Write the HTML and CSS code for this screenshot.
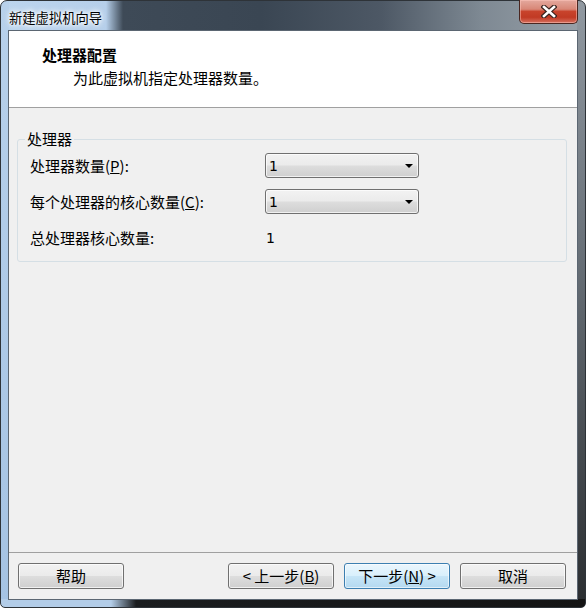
FILE: index.html
```html
<!DOCTYPE html>
<html lang="zh-CN">
<head>
    <meta charset="UTF-8">
    <meta name="viewport" content="width=device-width, initial-scale=1.0">
    <title>新建虚拟机向导</title>
    <link rel="stylesheet" href="styles.css">
</head>
<body>
    <!-- Janela do assistente -->
    <div class="window">
        <div class="titlebar">
            <span class="title">新建虚拟机向导</span>
            <button class="close-btn" aria-label="关闭">
                <svg width="16" height="13" viewBox="0 0 16 13">
                    <path d="M3 2 L13 11 M13 2 L3 11" stroke="#3b2520" stroke-width="5" stroke-linecap="square"/>
                    <path d="M3 2 L13 11 M13 2 L3 11" stroke="#ffffff" stroke-width="2.6" stroke-linecap="square"/>
                </svg>
            </button>
        </div>

        <div class="client">
            <!-- cabecalho branco -->
            <div class="header">
                <h1>处理器配置</h1>
                <p>为此虚拟机指定处理器数量。</p>
            </div>

            <div class="content">
                <fieldset class="group">
                    <legend>处理器</legend>
                    <div class="row">
                        <label>处理器数量(<u>P</u>):</label>
                        <div class="combo"><span class="num">1</span><span class="arrow"></span></div>
                    </div>
                    <div class="row">
                        <label>每个处理器的核心数量(<u>C</u>):</label>
                        <div class="combo"><span class="num">1</span><span class="arrow"></span></div>
                    </div>
                    <div class="row">
                        <label>总处理器核心数量:</label>
                        <span class="num value">1</span>
                    </div>
                </fieldset>
            </div>

            <!-- botoes -->
            <div class="footer">
                <button class="btn help">帮助</button>
                <button class="btn">&lt;&nbsp;上一步(<u>B</u>)</button>
                <button class="btn focused">下一步(<u>N</u>)&nbsp;&gt;</button>
                <button class="btn">取消</button>
            </div>
        </div>
    </div>
</body>
</html>
```

FILE: styles.css
```css
* {
  margin: 0;
  padding: 0;
  box-sizing: border-box;
}

body {
  width: 586px;
  height: 608px;
  font-family: 'Noto Sans CJK SC', 'DejaVu Sans', sans-serif;
  font-size: 15px;
  color: #000;
  overflow: hidden;
}

/* moldura estilo Aero */
.window {
  width: 586px;
  height: 608px;
  border: 1px solid #2e3338;
  border-radius: 7px 7px 5px 5px;
  padding: 0 7px 7px 7px;
  display: flex;
  flex-direction: column;
  background:
    linear-gradient(to right, #b3cde8 0, #b3cde8 110px, #1b1d1f 135px, #141414 100%) left bottom / 100% 8px no-repeat,
    linear-gradient(to bottom, #b8d1eb, #a5c3e3) left top / 8px 100% no-repeat,
    linear-gradient(to bottom, #9199a1 0, #6a727a 40%, #2a2d30 100%) right top / 8px 100% no-repeat,
    linear-gradient(to right, #bcd5ee 0, #b6cfea 105px, #3e4a57 122px, #3a4653 260px, #4d5865 380px, #7e8993 480px, #9aa2aa 586px);
}

.titlebar {
  height: 29px;
  display: flex;
  justify-content: space-between;
  align-items: flex-start;
}

.title {
  font-size: 13.3px;
  line-height: 18px;
  margin-top: 8px;
  margin-left: 1px;
  text-shadow: 0 0 6px #fff, 0 0 6px #fff, 0 0 3px #fff;
}

.close-btn {
  width: 59px;
  height: 24px;
  margin-top: -1px;
  border: 1px solid #4a2620;
  border-top: none;
  border-radius: 0 0 5px 5px;
  background: linear-gradient(to bottom, #e4a99e 0, #d88777 40%, #c8432c 50%, #c13a24 75%, #d6705f 100%);
  box-shadow: inset 0 0 0 1px rgba(255, 200, 190, 0.5);
  display: flex;
  justify-content: center;
  align-items: center;
}

.client {
  flex: 1;
  border: 1px solid #5b6672;
  background-color: #f0f0f0;
  display: flex;
  flex-direction: column;
}

.header {
  height: 77px;
  background-color: #fff;
  border-bottom: 1px solid #a0a0a0;
  padding: 14px 0 0 33px;
}

.header h1 {
  font-size: 15px;
  font-weight: bold;
  line-height: 20px;
}

.header p {
  line-height: 20px;
  margin-top: 3px;
  padding-left: 31px;
}

.content {
  flex: 1;
  padding: 21px 10px 0 8px;
}

.group {
  border: 1px solid #d5dfe5;
  border-radius: 3px;
  padding: 4px 12px 11px 12px;
}

.group legend {
  margin-left: -5px;
  padding: 0 2px;
  line-height: 20px;
}

.row {
  display: grid;
  grid-template-columns: 235px 154px;
  align-items: center;
  height: 25px;
  margin-bottom: 11px;
}

.row:last-child {
  margin-bottom: 0;
}

.row label {
  line-height: 20px;
}

.num {
  font-family: 'DejaVu Sans', sans-serif;
  font-size: 14px;
}

.value {
  padding-left: 1px;
}

.combo {
  height: 25px;
  border: 1px solid #707070;
  border-radius: 3px;
  background: linear-gradient(to bottom, #f2f2f2 0, #ebebeb 48%, #dddddd 52%, #cfcfcf 100%);
  box-shadow: inset 0 0 0 1px rgba(255, 255, 255, 0.7);
  display: flex;
  justify-content: space-between;
  align-items: center;
  padding: 0 5px 0 3px;
}

.arrow {
  width: 0;
  height: 0;
  border-left: 4px solid transparent;
  border-right: 4px solid transparent;
  border-top: 4px solid #000;
}

.footer {
  border-top: 1px solid #a0a0a0;
  padding: 10px 11px 10px 9px;
  display: flex;
  gap: 10px;
}

.btn {
  width: 106px;
  height: 26px;
  border: 1px solid #707070;
  border-radius: 3px;
  background: linear-gradient(to bottom, #f2f2f2 0, #ebebeb 48%, #dddddd 52%, #cfcfcf 100%);
  box-shadow: inset 0 0 0 1px rgba(255, 255, 255, 0.7);
  font-family: 'Noto Sans CJK SC', 'DejaVu Sans', sans-serif;
  font-size: 15px;
  line-height: 20px;
  color: #000;
}

.btn.help {
  margin-right: auto;
}

.btn.focused {
  border-color: #3c7fb1;
  background: linear-gradient(to bottom, #eaf6fd 0, #d9f0fc 48%, #c6e5f7 52%, #b4d9f0 100%);
  box-shadow: inset 0 0 0 1px rgba(255, 255, 255, 0.6);
}
```
